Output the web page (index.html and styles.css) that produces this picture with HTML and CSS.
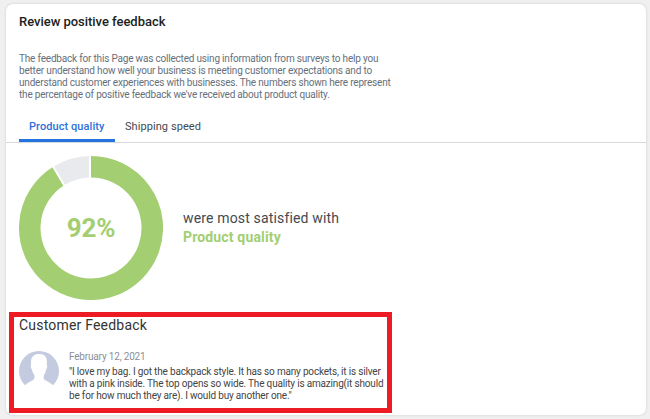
FILE: index.html
```html
<!DOCTYPE html>
<html lang="en">
<head>
    <meta charset="UTF-8">
    <meta name="viewport" content="width=device-width, initial-scale=1.0">
    <title>Review positive feedback</title>
    <link rel="stylesheet" href="styles.css">
</head>
<body>
    <div class="card">
        <h1>Review positive feedback</h1>
        <p class="description">
            The feedback for this Page was collected using information from surveys to help you<br>
            better understand how well your business is meeting customer expectations and to<br>
            understand customer experiences with businesses. The numbers shown here represent<br>
            the percentage of positive feedback we've received about product quality.
        </p>

        <!-- Tabs -->
        <div class="tabs">
            <a class="tab active">Product quality</a>
            <a class="tab">Shipping speed</a>
        </div>

        <!-- Score chart -->
        <div class="score">
            <div class="donut">
                <svg class="ring" viewBox="0 0 144 144">
                    <path class="good" d="M72 10.75A61.25 61.25 0 1 1 39.5 20.1"/>
                    <path class="rest" d="M39.5 20.1A61.25 61.25 0 0 1 72 10.75"/>
                    <path class="gap" d="M71 -1V23M33.2 9L46.2 31"/>
                </svg>
                <span class="percent">92%</span>
            </div>
            <div class="summary">
                <span>were most satisfied with</span>
                <strong>Product quality</strong>
            </div>
        </div>

        <!-- Customer review -->
        <div class="feedback">
            <h2>Customer Feedback</h2>
            <div class="review">
                <svg class="avatar" viewBox="0 0 40 40">
                    <path class="avatar-bg" d="M6 34.3A20 20 0 1 1 34 34.3C31.5 31.7 27.5 30.3 25.2 28.6C24.4 27.2 24.4 25 25.3 23.4C26.3 22 26.8 20.4 27 18.7C28.3 17.2 28.5 14.5 27.7 13.5C28.6 7 26.5 3 20.5 3C14.5 3 11 6.5 12.2 13.5C11.4 14.5 11.8 17.4 13 18.7C13.3 20.6 14 22.2 15.1 23.6C15.7 25.3 15.7 27.2 14.8 28.6C12.5 30.4 8.5 31.7 6 34.3Z"/>
                </svg>
                <div class="review-body">
                    <div class="date">February 12, 2021</div>
                    <p class="quote">
                        "I love my bag. I got the backpack style. It has so many pockets, it is silver<br>
                        with a pink inside. The top opens so wide. The quality is amazing(it should<br>
                        be for how much they are). I would buy another one."
                    </p>
                </div>
            </div>
        </div>
    </div>
</body>
</html>
```

FILE: styles.css
```css
* {
    box-sizing: border-box;
}

body {
    margin: 0;
    padding: 4px 4px 4px 6px;
    height: 419px;
    overflow: hidden;
    background-color: #f0f0f0;
    font-family: Roboto, sans-serif;
}

h1, h2, p {
    margin: 0;
}

.card {
    height: 411px;
    background-color: #ffffff;
    border-radius: 7px;
    box-shadow: 0 0 3px rgba(0, 0, 0, 0.14);
}

h1 {
    padding: 9px 0 0 13px;
    font-size: 13px;
    line-height: 18px;
    font-weight: 500;
    letter-spacing: -0.03px;
    color: #1c1e21;
}

.description {
    padding: 22px 0 0 13px;
    font-size: 10px;
    line-height: 12px;
    letter-spacing: -0.19px;
    white-space: nowrap;
    color: #65707c;
}

/* Tabs */
.tabs {
    display: flex;
    height: 32px;
    margin-top: 10px;
    padding-left: 13px;
    border-bottom: 1px solid #d9dadc;
}

.tab {
    height: 31px;
    padding: 0 10px;
    font-size: 11px;
    line-height: 31px;
    letter-spacing: 0.07px;
    color: #444950;
}

.tab.active {
    width: 96px;
    font-weight: 500;
    color: #2f6fd9;
    border-bottom: 3px solid #2374e1;
}

/* Score chart */
.score {
    display: flex;
    align-items: center;
    gap: 20px;
    padding: 13px 0 0 13px;
}

.donut {
    display: grid;
    width: 144px;
    height: 144px;
}

.ring, .percent {
    grid-area: 1 / 1;
}

.ring path {
    fill: none;
    stroke-width: 21.5;
}

.ring .good {
    stroke: #a3ce71;
}

.ring .rest {
    stroke: #e9eaee;
}

.ring .gap {
    stroke: #ffffff;
    stroke-width: 2;
}

.percent {
    place-self: center;
    font-size: 26px;
    font-weight: 700;
    letter-spacing: -0.2px;
    color: #a3ce71;
}

.summary {
    display: flex;
    flex-direction: column;
    font-size: 14px;
    line-height: 19px;
    letter-spacing: 0.16px;
    color: #444950;
}

.summary strong {
    color: #a3ce71;
}

/* Highlighted review */
.feedback {
    width: 383px;
    height: 101px;
    margin: 12px 0 0 3px;
    padding: 0 5px;
    border: 5px solid #ed1c24;
}

h2 {
    font-size: 14px;
    line-height: 17px;
    font-weight: 400;
    letter-spacing: 0.2px;
    color: #333333;
}

.review {
    display: flex;
    gap: 10px;
    margin-top: 17px;
}

.avatar {
    width: 40px;
    height: 40px;
    flex: none;
}

.avatar-bg {
    fill: #c4cadf;
}

.date {
    font-size: 10px;
    line-height: 12px;
    letter-spacing: -0.18px;
    color: #8a8f99;
}

.quote {
    margin-top: 3px;
    font-size: 10px;
    line-height: 12px;
    letter-spacing: -0.18px;
    white-space: nowrap;
    color: #444444;
}
```
